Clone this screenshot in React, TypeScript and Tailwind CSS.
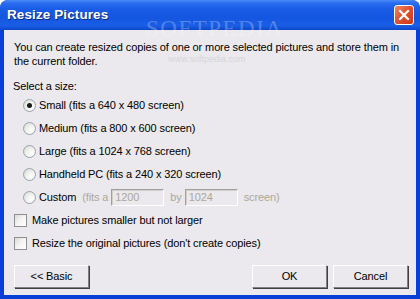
import React from "react";

function Radio({ checked }: { checked?: boolean }) {
  return (
    <div className="w-[13px] h-[13px] rounded-full border border-[#9aa3ad] bg-[radial-gradient(circle_at_70%_70%,#ffffff_0%,#f3f3f0_40%,#d6d6d0_100%)] flex items-center justify-center shrink-0">
      {checked && <div className="w-[5px] h-[5px] rounded-full bg-[#1a1a1a]" />}
    </div>
  );
}

function Check() {
  return (
    <div className="w-[13px] h-[13px] border border-[#8f9092] bg-[linear-gradient(135deg,#dcdcd6_0%,#f4f4f2_50%,#ffffff_100%)] shrink-0" />
  );
}

function Btn({ children }: { children: React.ReactNode }) {
  return (
    <div className="w-[75px] h-[23px] flex items-center justify-center bg-[#ebe9ed] border-t border-l border-t-white border-l-white border-r border-b border-r-[#808080] border-b-[#808080] shadow-[1px_1px_0_#404040] text-[11px] text-black">
      {children}
    </div>
  );
}

export default function App() {
  return (
    <div
      className="w-[420px] h-[299px] bg-[#0a3fd6] rounded-t-[8px] flex flex-col overflow-hidden relative"
      style={{ fontFamily: '"Liberation Sans", Arial, sans-serif' }}
    >
      <div className="h-[30px] shrink-0 bg-[linear-gradient(to_bottom,#4a8cf6_0%,#2a6df0_10%,#1a5ce6_30%,#1556e0_60%,#1a5ee6_85%,#0d47c9_100%)] flex items-center justify-between pl-[7px] pr-[6px]">
        <span className="text-white font-bold text-[13.5px] tracking-[0.1px] [text-shadow:1px_1px_0_#0a2a80]">
          Resize Pictures
        </span>
        <div className="w-[20px] h-[20px] rounded-[3px] border border-white bg-[linear-gradient(135deg,#f08a6a_0%,#e0532e_45%,#c83a18_100%)] flex items-center justify-center">
          <svg width="12" height="12" viewBox="0 0 12 12">
            <path d="M2 2 L10 10 M10 2 L2 10" stroke="white" strokeWidth="2.2" strokeLinecap="square" />
          </svg>
        </div>
      </div>
      <div className="flex-1 mx-[4px] mb-[4px] bg-[#ebe9ed] flex flex-col pl-[10px] pt-[10px] text-[11px] tracking-[-0.12px] text-black relative">
        <div className="leading-[14px]">
          You can create resized copies of one or more selected pictures and store them in
          <br />
          the current folder.
        </div>
        <div className="leading-[14px] mt-[11px] -ml-[1px]">Select a size:</div>
        <div className="flex flex-col pl-[9px] mt-[1px]">
          <div className="h-[23px] flex items-center gap-[3px]">
            <Radio checked />
            <span>Small (fits a 640 x 480 screen)</span>
          </div>
          <div className="h-[23px] flex items-center gap-[3px]">
            <Radio />
            <span>Medium (fits a 800 x 600 screen)</span>
          </div>
          <div className="h-[23px] flex items-center gap-[3px]">
            <Radio />
            <span>Large (fits a 1024 x 768 screen)</span>
          </div>
          <div className="h-[23px] flex items-center gap-[3px]">
            <Radio />
            <span>Handheld PC (fits a 240 x 320 screen)</span>
          </div>
          <div className="h-[23px] flex items-center gap-[3px]">
            <Radio />
            <span>Custom</span>
            <span className="text-[#aca899] ml-[3px]">(fits a</span>
            <div className="w-[53px] h-[17px] border border-[#a0a0a0] border-r-white border-b-white shadow-[inset_1px_1px_0_#d4d0c8] flex items-center pl-[3px] text-[#aca899]">
              1200
            </div>
            <span className="text-[#aca899] ml-[3px]">by</span>
            <div className="w-[53px] h-[17px] border border-[#a0a0a0] border-r-white border-b-white shadow-[inset_1px_1px_0_#d4d0c8] flex items-center pl-[3px] text-[#aca899]">
              1024
            </div>
            <span className="text-[#aca899] ml-[3px]">screen)</span>
          </div>
        </div>
        <div className="h-[23px] flex items-center gap-[5px]">
          <Check />
          <span>Make pictures smaller but not larger</span>
        </div>
        <div className="h-[23px] flex items-center gap-[5px]">
          <Check />
          <span>Resize the original pictures (don't create copies)</span>
        </div>
        <div className="flex items-center mt-[10px] pr-[8px]">
          <Btn>&lt;&lt; Basic</Btn>
          <div className="flex-1" />
          <Btn>OK</Btn>
          <div className="w-[6px]" />
          <Btn>Cancel</Btn>
        </div>
      </div>
      <div
        className="absolute left-[146px] top-[21px] text-[23px] leading-[16px] tracking-[1.5px] text-white/25 pointer-events-none"
        style={{ fontFamily: '"Liberation Serif", serif' }}
      >
        SOFTPEDIA
      </div>
      <div className="absolute left-[168px] top-[55px] text-[9px] leading-[8px] text-[#c8c6cc]/60 pointer-events-none">
        www.softpedia.com
      </div>
    </div>
  );
}
